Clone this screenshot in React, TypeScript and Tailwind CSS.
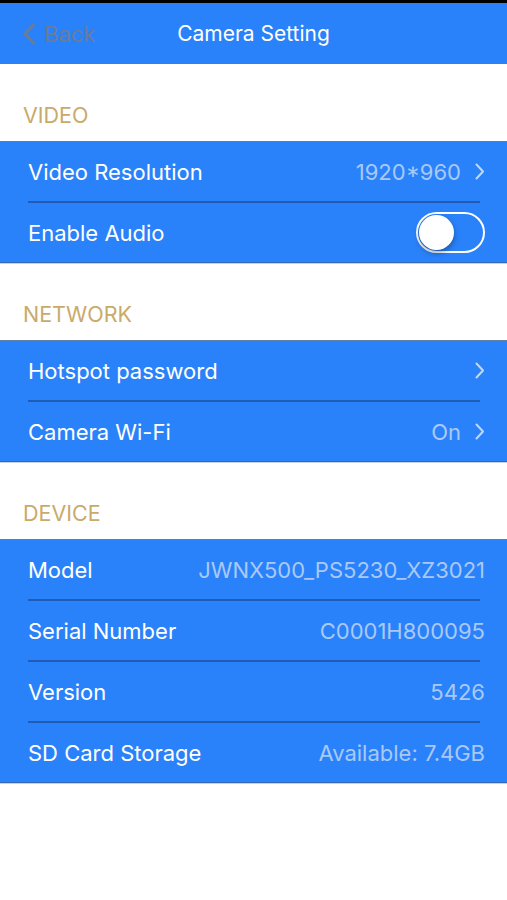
import React, { useState } from 'react';

type Row = {
  label: string;
  value?: string;
  chevron?: boolean;
  toggle?: boolean;
};

type Section = {
  title: string;
  rows: Row[];
};

const sections: Section[] = [
  {
    title: 'VIDEO',
    rows: [
      { label: 'Video Resolution', value: '1920*960', chevron: true },
      { label: 'Enable Audio', toggle: true },
    ],
  },
  {
    title: 'NETWORK',
    rows: [
      { label: 'Hotspot password', chevron: true },
      { label: 'Camera Wi-Fi', value: 'On', chevron: true },
    ],
  },
  {
    title: 'DEVICE',
    rows: [
      { label: 'Model', value: 'JWNX500_PS5230_XZ3021' },
      { label: 'Serial Number', value: 'C0001H800095' },
      { label: 'Version', value: '5426' },
      { label: 'SD Card Storage', value: 'Available: 7.4GB' },
    ],
  },
];

const Chevron = ({ className = '' }: { className?: string }) => (
  <svg width="10" height="17" viewBox="0 0 10 17" fill="none" className={className}>
    <path d="M1.5 1.5L8 8.5L1.5 15.5" stroke="currentColor" strokeWidth="2" strokeLinecap="round" strokeLinejoin="round" />
  </svg>
);

const Toggle = () => {
  const [on, setOn] = useState(false);
  return (
    <button
      onClick={() => setOn(!on)}
      className={`relative w-[69px] h-[41px] rounded-full border-2 border-white ${on ? 'bg-[#4cd964]' : 'bg-transparent'}`}
    >
      <span
        className={`absolute top-[1px] w-[35px] h-[35px] rounded-full bg-white shadow-[0_3px_6px_rgba(0,0,0,0.35)] ${on ? 'right-[1px]' : 'left-[1px]'}`}
      />
    </button>
  );
};

export default function App() {
  return (
    <div className="min-h-[900px] bg-white font-['Inter',sans-serif]">
      <div className="h-[3px] bg-black" />
      <div className="relative h-[61px] bg-[#2a82fb] flex items-center justify-center">
        <button className="absolute left-[22px] top-0 h-full flex items-center gap-[8px] text-[#6a7c96]">
          <svg width="14" height="22" viewBox="0 0 14 22" fill="none">
            <path d="M11.5 2L3 11L11.5 20" stroke="currentColor" strokeWidth="3" strokeLinecap="round" strokeLinejoin="round" />
          </svg>
          <span className="text-[22px] leading-none">Back</span>
        </button>
        <h1 className="text-[21px] text-white leading-none">Camera Setting</h1>
      </div>

      {sections.map((s) => (
        <div key={s.title}>
          <div className="h-[77px] flex items-end pb-[15px] px-[23px]">
            <span className="text-[21.5px] text-[#c9aa6b] leading-none">{s.title}</span>
          </div>
          <div className="bg-[#2a82fb] border-t border-[#5f7ea8] border-b border-b-[#3468b8] shadow-[0_1px_0_#c8d0da]">
            {s.rows.map((r, i) => (
              <div key={r.label}>
                {i > 0 && <div className="ml-[28px] mr-[27px] h-[2px] bg-[#1f5cb5]" />}
                <div className="h-[59px] flex items-center justify-between pl-[28px] pr-[22px]">
                  <span className="text-[22px] text-white leading-none">{r.label}</span>
                  <div className="flex items-center gap-[14px]">
                    {r.value && <span className="text-[22px] text-[#a9c9f4] leading-none">{r.value}</span>}
                    {r.chevron && <Chevron className="text-[#c2d8f6]" />}
                    {r.toggle && <Toggle />}
                  </div>
                </div>
              </div>
            ))}
          </div>
        </div>
      ))}
    </div>
  );
}
